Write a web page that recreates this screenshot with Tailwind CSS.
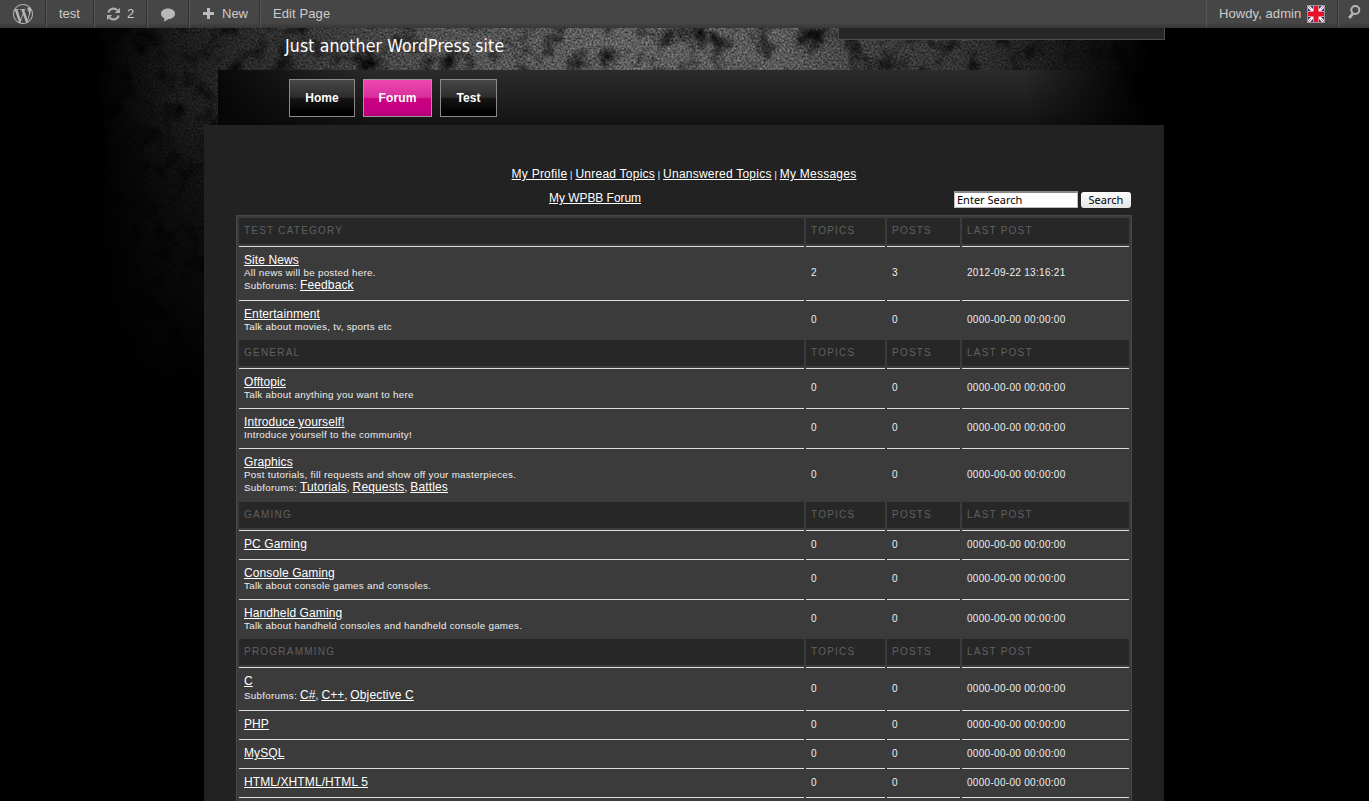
<!DOCTYPE html>
<html lang="en">
<head>
<meta charset="utf-8">
<title>Forum | test</title>
<script src="https://cdn.jsdelivr.net/npm/@tailwindcss/browser@4"></script>
</head>
<body class="bg-black">
<div class="relative h-[801px] w-[1369px] overflow-hidden bg-black font-['Liberation_Sans',Arial,sans-serif] text-white">

  <!-- concrete texture behind the page -->
  <svg class="absolute left-0 top-0" width="1369" height="801" aria-hidden="true">
    <defs>
      <filter id="grain" x="0" y="0" width="100%" height="100%" color-interpolation-filters="sRGB">
        <feTurbulence type="fractalNoise" baseFrequency="0.5" numOctaves="2" seed="7" result="f"/>
        <feColorMatrix in="f" type="matrix" values="0.6 0 0 0 0.07  0.6 0 0 0 0.07  0.6 0 0 0 0.07  0 0 0 0 1" result="fine"/>
        <feTurbulence type="fractalNoise" baseFrequency="0.045 0.04" numOctaves="5" seed="21" result="c"/>
        <feColorMatrix in="c" type="matrix" values="2.2 0 0 0 -0.15  2.2 0 0 0 -0.15  2.2 0 0 0 -0.15  0 0 0 0 1" result="coarse"/>
        <feBlend in="fine" in2="coarse" mode="multiply"/>
      </filter>
      <linearGradient id="across" x1="0" x2="1369" y1="0" y2="0" gradientUnits="userSpaceOnUse">
        <stop offset="0.07" stop-color="#000"/><stop offset="0.13" stop-color="#484848"/>
        <stop offset="0.2" stop-color="#808080"/><stop offset="0.32" stop-color="#d8d8d8"/>
        <stop offset="0.45" stop-color="#fff"/><stop offset="0.57" stop-color="#f4f4f4"/>
        <stop offset="0.64" stop-color="#a8a8a8"/><stop offset="0.7" stop-color="#8c8c8c"/><stop offset="0.77" stop-color="#484848"/>
        <stop offset="0.84" stop-color="#000"/>
      </linearGradient>
      <linearGradient id="down" x1="0" x2="0" y1="0" y2="400" gradientUnits="userSpaceOnUse">
        <stop offset="0.25" stop-color="#000" stop-opacity="0"/><stop offset="0.45" stop-color="#000" stop-opacity=".45"/><stop offset="1" stop-color="#000"/>
      </linearGradient>
      <mask id="fade"><rect width="1369" height="801" fill="url(#across)"/><rect width="1369" height="801" fill="url(#down)"/></mask>
    </defs>
    <g mask="url(#fade)"><rect width="1369" height="420" filter="url(#grain)"/></g>
  </svg>

  <div class="relative flex h-full flex-col">
    <!-- admin bar -->
    <div class="flex h-7 shrink-0 justify-between bg-linear-to-b from-[#464646] from-80% to-[#373737] text-[13px] leading-7 text-[#ccc]">
      <div class="flex">
        <div class="flex w-[46px] items-center justify-center border-r border-[#333]">
          <svg width="20" height="20" viewBox="0 0 24 24" fill="#b4b4b4"><path d="M21.469 6.825c.84 1.537 1.318 3.3 1.318 5.175 0 3.979-2.156 7.456-5.363 9.325l3.295-9.527c.615-1.54.82-2.771.82-3.864 0-.405-.026-.78-.07-1.11m-7.981.105c.647-.03 1.232-.105 1.232-.105.582-.075.514-.93-.067-.899 0 0-1.755.135-2.88.135-1.064 0-2.85-.15-2.85-.15-.585-.03-.661.855-.075.885 0 0 .54.061 1.125.09l1.68 4.605-2.37 7.08L5.354 6.9c.649-.03 1.234-.1 1.234-.1.585-.075.516-.93-.065-.896 0 0-1.746.138-2.874.138-.2 0-.438-.008-.69-.015C4.911 3.15 8.235 1.215 12 1.215c2.809 0 5.365 1.072 7.286 2.833-.046-.003-.091-.009-.141-.009-1.06 0-1.812.923-1.812 1.914 0 .89.513 1.643 1.06 2.531.411.72.89 1.643.89 2.977 0 .915-.354 1.994-.821 3.479l-1.075 3.585-3.9-11.61.001.014zM12 22.784c-1.059 0-2.081-.153-3.048-.437l3.237-9.406 3.315 9.087c.024.053.05.101.078.149-1.12.393-2.325.609-3.582.609M1.211 12c0-1.564.336-3.05.935-4.39L7.29 21.709C3.694 19.96 1.212 16.271 1.211 12M12 0C5.385 0 0 5.385 0 12s5.385 12 12 12 12-5.385 12-12S18.615 0 12 0"/></svg>
        </div>
        <div class="w-12 border-x border-l-[#555] border-r-[#333] pl-3">test</div>
        <div class="flex w-[53px] items-center border-x border-l-[#555] border-r-[#333] pl-3">
          <svg class="-ml-px" width="15" height="14" viewBox="0 0 15 14" fill="none" stroke="#b0b0b0" stroke-width="2.200"><path d="M2.400 5.600A5.200 5.200 0 0 1 11.400 3.400M12.600 8.400A5.200 5.200 0 0 1 3.600 10.600"/><path d="M14 .8V6H8.800zM1 13.200V8H6.200z" fill="#b0b0b0" stroke="none"/></svg>
          <span class="ml-[6px]">2</span>
        </div>
        <div class="flex w-[42px] items-center border-x border-l-[#555] border-r-[#333] pl-3 pt-px">
          <svg width="16" height="14" viewBox="0 0 16 14" fill="#b8b8b8"><path d="M8 .5C12 .5 15 2.700 15 5.700S12.200 10.800 8.500 11L4 13.700 4.400 10.300C2.200 9.400 1 7.700 1 5.700 1 2.700 4 .5 8 .5z"/></svg>
        </div>
        <div class="flex w-[71px] items-center border-x border-l-[#555] border-r-[#333] pl-[13px]">
          <svg class="-mt-px" width="11" height="11" viewBox="0 0 11 11" fill="#bababa"><path d="M4 0h3v4h4v3H7v4H4V7H0V4h4z"/></svg>
          <span class="ml-2">New</span>
        </div>
        <div class="border-l border-[#555] pl-3 tracking-[0.1px]">Edit Page</div>
      </div>
      <div class="flex">
        <div class="flex w-[132px] items-center border-x border-l-[#555] border-r-[#333] pl-3">
          <span class="whitespace-nowrap tracking-[0.08px]">Howdy, admin</span>
          <svg class="ml-auto mr-3" width="18" height="18" viewBox="0 0 18 18"><path fill="#999" d="M0 0h18v18H0z"/><path fill="#fff" d="M1 1h16v16H1z"/><path fill="#27357e" d="M3 1h3v3zM15 1h-3v3zM1 3v3h3zM17 3v3h-3zM3 17h3v-3zM15 17h-3v-3zM1 15v-3h3zM17 15v-3h-3z"/><path stroke="#e2727c" d="M1 1l3 3M17 1l-3 3M1 17l3-3M17 17l-3-3"/><path fill="#e8112a" d="M6.500 1h5v5.500H17v5h-5.500V17h-5v-5.500H1v-5h5.500z"/></svg>
        </div>
        <div class="w-[31px] border-l border-[#555] pl-[9px] pt-[5px]">
          <svg width="13" height="15" viewBox="0 0 13 15" fill="none" stroke="#b6b6b6"><circle cx="7.300" cy="5" r="4" stroke-width="2"/><path d="M4.800 8.600L1.200 13" stroke-width="2.800"/></svg>
        </div>
      </div>
    </div>

    <!-- site header -->
    <div class="flex h-[42px] shrink-0 justify-between pl-[285px] pr-[204px]">
      <div class="mt-[5px] whitespace-nowrap font-['DejaVu_Sans_Condensed','Noto_Sans',sans-serif] text-[17.5px] leading-[26px] tracking-[0.13px]">Just another WordPress site</div>
      <div class="h-3 w-[327px] border border-t-0 border-[#4d4d4d] bg-[#272727]"></div>
    </div>

    <!-- main navigation -->
    <div class="relative ml-[218px] h-[55px] w-[934px] shrink-0 bg-linear-to-b from-[#2c2c2c] to-[#131313]">
      <div class="flex h-full gap-2 bg-[linear-gradient(78deg,#060606_0%,#06060600_18%,#00000000_86%,#010101_98%)] pl-[71px] pt-[9px] text-center text-[12px] font-bold leading-9 tracking-[0.1px]">
        <div class="h-[38px] w-[66px] border border-[#8a8a8a] bg-[linear-gradient(#484848,#2c2c2c_48%,#161616_50%,#000_90%)]">Home</div>
        <div class="h-[38px] w-[69px] border border-[#999] bg-[linear-gradient(#ec48b0,#d92e9c_48%,#c9007f_52%,#c50084_80%,#b5007a)]">Forum</div>
        <div class="h-[38px] w-[57px] border border-[#8a8a8a] bg-[linear-gradient(#484848,#2c2c2c_48%,#161616_50%,#000_90%)]">Test</div>
      </div>
    </div>

    <!-- content -->
    <div class="ml-[204px] w-[960px] flex-1 bg-[#222] px-8 pt-[41px]">
      <div class="flex h-4 justify-center whitespace-pre text-[12px] leading-4 tracking-[0.24px]"><a class="underline">My Profile</a><span class="text-[9px] leading-[18px]"> | </span><a class="underline">Unread Topics</a><span class="text-[9px] leading-[18px]"> | </span><a class="underline">Unanswered Topics</a><span class="text-[9px] leading-[18px]"> | </span><a class="underline">My Messages</a></div>
      <div class="mt-2 flex h-[18px] justify-between pr-px">
        <a class="ml-[313px] text-[12px] leading-4 tracking-[-0.05px] underline">My WPBB Forum</a>
        <div class="mt-px flex h-[17px] gap-[3px] font-['Noto_Sans',sans-serif] text-[11px] leading-4 text-black">
          <div class="h-[17px] w-[124px] border border-t-2 border-[#bbb] border-t-[#888] bg-white pl-[2px] leading-[14px]">Enter Search</div>
          <div class="mt-px h-4 w-[50px] rounded-[3px] bg-linear-to-b from-white to-[#e4e4e4] text-center">Search</div>
        </div>
      </div>
      <div id="forum" class="mt-[7px] grid h-[640px] w-[896px] auto-rows-max grid-cols-[565px_79px_73px_167px] gap-[2px] border border-[#484848] bg-[#3b3b3b] p-[2px] text-[10px]"></div>
    </div>
  </div>
</div>

<script>
  const none = '0000-00-00 00:00:00';
  const groups = [
    ['TEST CATEGORY', [
      ['Site News', 'All news will be posted here.', ['Feedback'], 2, 3, '2012-09-22 13:16:21'],
      ['Entertainment', 'Talk about movies, tv, sports etc', [], 0, 0, none]]],
    ['GENERAL', [
      ['Offtopic', 'Talk about anything you want to here', [], 0, 0, none],
      ['Introduce yourself!', 'Introduce yourself to the community!', [], 0, 0, none],
      ['Graphics', 'Post tutorials, fill requests and show off your masterpieces.', ['Tutorials', 'Requests', 'Battles'], 0, 0, none]]],
    ['GAMING', [
      ['PC Gaming', '', [], 0, 0, none],
      ['Console Gaming', 'Talk about console games and consoles.', [], 0, 0, none],
      ['Handheld Gaming', 'Talk about handheld consoles and handheld console games.', [], 0, 0, none]]],
    ['PROGRAMMING', [
      ['C', '', ['C#', 'C++', 'Objective C'], 0, 0, none],
      ['PHP', '', [], 0, 0, none],
      ['MySQL', '', [], 0, 0, none],
      ['HTML/XHTML/HTML 5', '', [], 0, 0, none],
      ['', '', [], '', '', '']]]
  ];
  const head = t => `<div class="h-[26px] bg-[#272727] pl-[5px] leading-[25px] tracking-[1.22px] text-[#606060]">${t}</div>`;
  const cell = t => `<div class="flex items-center border-t border-[#ddd] pl-[5px] tracking-[0.3px] text-[#eee]">${t}</div>`;
  let html = '';
  for (const [title, rows] of groups) {
    html += [title, 'TOPICS', 'POSTS', 'LAST POST'].map(head).join('');
    for (const [name, desc, subs, topics, posts, last] of rows) {
      html += `<div class="whitespace-nowrap border-t border-[#ddd] py-[6px] pl-[5px]">
        <div class="h-[14px] text-[12px] leading-[14px] tracking-[0.1px]"><a class="underline">${name}</a></div>
        ${desc ? `<div class="h-[11px] text-[9.8px] leading-[11px] tracking-[0.28px] text-[#eee]">${desc}</div>` : ''}
        ${subs.length ? `<div class="h-[14px] text-[12px] leading-[14px] tracking-[0.14px]"><span class="text-[9.8px] tracking-[0.28px] text-[#eee]">Subforums: </span>${subs.map(s => `<a class="underline">${s}</a>`).join('<span class="text-[10px]">, </span>')}</div>` : ''}
      </div>` + [topics, posts, last].map(cell).join('');
    }
  }
  document.getElementById('forum').innerHTML = html;
</script>
</body>
</html>
